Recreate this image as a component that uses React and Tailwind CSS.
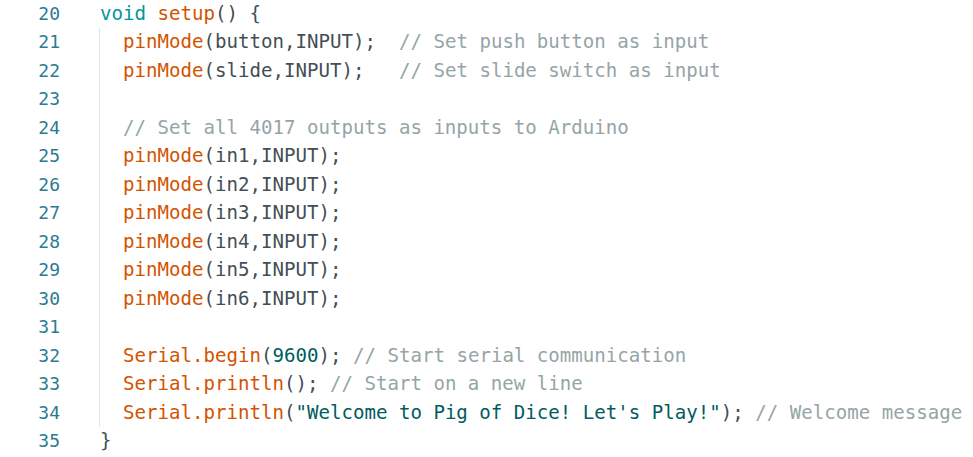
const C = {
  k: "text-[#00979d]",
  f: "text-[#d35400]",
  c: "text-[#95a5a6]",
  s: "text-[#005c5f]",
};

const F = ({ children }) => <span className={C.f}>{children}</span>;
const K = ({ children }) => <span className={C.k}>{children}</span>;
const Cm = ({ children }) => <span className={C.c}>{children}</span>;
const S = ({ children }) => <span className={C.s}>{children}</span>;

const pin = (arg) => (
  <>
    <F>pinMode</F>({arg},INPUT);
  </>
);

const body = [
  <>
    {pin("button")}
    {"  "}
    <Cm>// Set push button as input</Cm>
  </>,
  <>
    {pin("slide")}
    {"   "}
    <Cm>// Set slide switch as input</Cm>
  </>,
  null,
  <Cm>// Set all 4017 outputs as inputs to Arduino</Cm>,
  pin("in1"),
  pin("in2"),
  pin("in3"),
  pin("in4"),
  pin("in5"),
  pin("in6"),
  null,
  <>
    <F>Serial.begin</F>(<S>9600</S>); <Cm>// Start serial communication</Cm>
  </>,
  <>
    <F>Serial.println</F>(); <Cm>// Start on a new line</Cm>
  </>,
  <>
    <F>Serial.println</F>(<S>"Welcome to Pig of Dice! Let's Play!"</S>);{" "}
    <Cm>// Welcome message</Cm>
  </>,
];

function Row({ children }) {
  return <div className="h-[28.47px] leading-[28.47px] whitespace-pre">{children}</div>;
}

export default function App() {
  const nums = Array.from({ length: 16 }, (_, i) => 20 + i);
  return (
    <div className="w-[973px] h-[457px] overflow-hidden bg-white text-[#434f54] font-['DejaVu_Sans_Mono',monospace] text-[19.1px]">
      <div className="flex">
        {/* Gutter */}
        <div className="w-[60px] text-right text-[#2b7b91] text-[18px]">
          {nums.map((n) => (
            <Row key={n}>{n}</Row>
          ))}
        </div>

        {/* Code */}
        <div className="ml-[39px] flex-1">
          <Row>
            <span className="pl-px">
              <K>void</K> <F>setup</F>() {"{"}
            </span>
          </Row>
          <div className="border-l border-[#e4e4e4] pl-[23px]">
            {body.map((line, i) => (
              <Row key={i}>{line}</Row>
            ))}
          </div>
          <Row>
            <span className="pl-px">{"}"}</span>
          </Row>
        </div>
      </div>
    </div>
  );
}
